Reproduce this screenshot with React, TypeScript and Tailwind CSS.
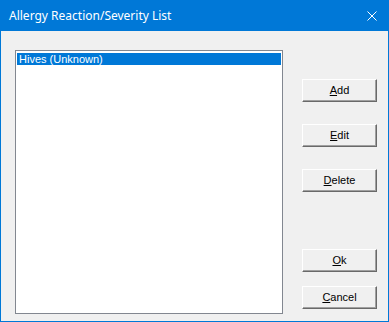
export default function App() {
  return (
    <div className="w-[389px] h-[322px] flex flex-col bg-[#0078d7] font-['Liberation_Sans',sans-serif]">
      {/* Title bar */}
      <div className="h-[31px] flex items-center justify-between pl-[9px] pr-[11px] text-white shrink-0">
        <span className="text-[12px] font-['Noto_Sans',sans-serif] leading-none">Allergy Reaction/Severity List</span>
        <svg width="10" height="10" viewBox="0 0 10 10" className="mr-[1px]">
          <path d="M0.5 0.5 L9.5 9.5 M9.5 0.5 L0.5 9.5" stroke="white" strokeWidth="1" />
        </svg>
      </div>

      {/* Body */}
      <div className="flex-1 mx-[1px] mb-[1px] bg-[#f0f0f0] flex text-[11px] text-black">
        <div className="ml-[14px] mt-[19px] w-[268px] h-[264px] border border-[#828790] bg-white p-[1px]">
          <div className="h-[12px] mt-[1px] bg-[#0078d7] text-white leading-[12px] pl-[2px]">Hives (Unknown)</div>
        </div>

        <div className="ml-[19px] pt-[48px] flex flex-col">
          <Btn><u>A</u>dd</Btn>
          <div className="mt-[22px]"><Btn><u>E</u>dit</Btn></div>
          <div className="mt-[22px]"><Btn><u>D</u>elete</Btn></div>
          <div className="mt-[57px]"><Btn><u>O</u>k</Btn></div>
          <div className="mt-[14px]"><Btn><u>C</u>ancel</Btn></div>
        </div>
      </div>
    </div>
  )
}

function Btn({ children }: { children: React.ReactNode }) {
  return (
    <div className="w-[75px] h-[23px] bg-[#f0f0f0] border-t border-l border-t-white border-l-white border-r border-b border-r-[#696969] border-b-[#696969] shadow-[inset_-1px_-1px_0_#a0a0a0] flex items-center justify-center">
      <span>{children}</span>
    </div>
  )
}
